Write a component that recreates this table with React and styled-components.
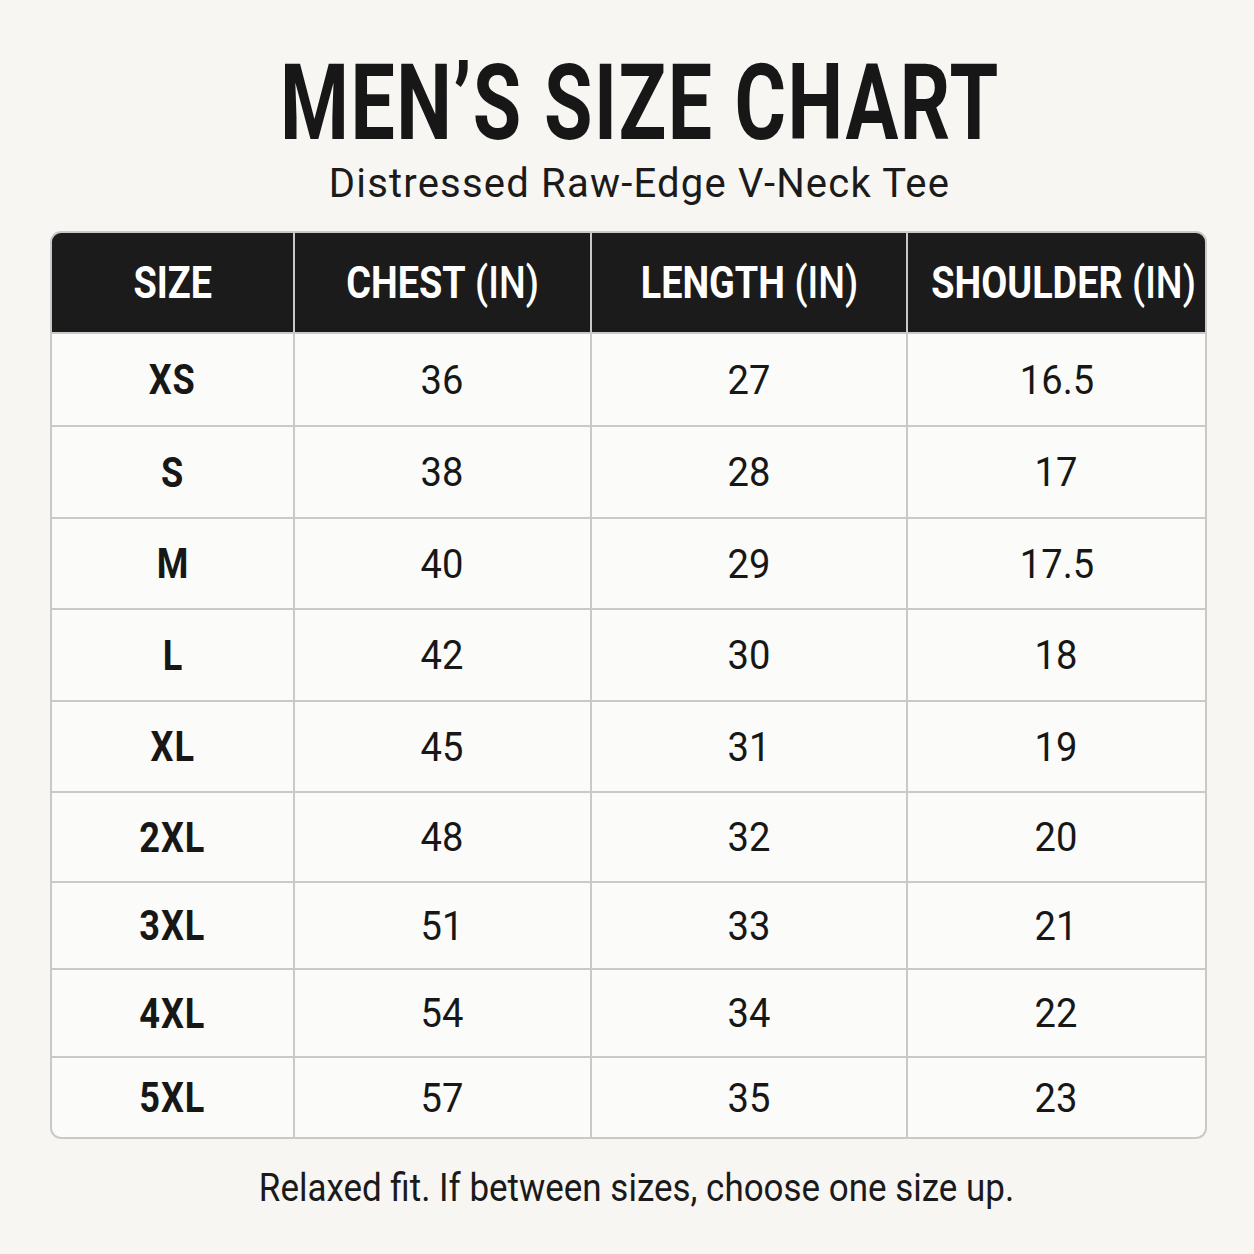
import React from 'react';
import styled, { createGlobalStyle } from 'styled-components';

const GlobalStyle = createGlobalStyle`
  html, body {
    margin: 0;
    padding: 0;
    background: #f7f6f2;
  }
  body {
    font-family: Roboto, "Liberation Sans", Arial, sans-serif;
    color: #161616;
  }
`;

const rows = [
  ['XS', '36', '27', '16.5'],
  ['S', '38', '28', '17'],
  ['M', '40', '29', '17.5'],
  ['L', '42', '30', '18'],
  ['XL', '45', '31', '19'],
  ['2XL', '48', '32', '20'],
  ['3XL', '51', '33', '21'],
  ['4XL', '54', '34', '22'],
  ['5XL', '57', '35', '23'],
];

const headers = ['SIZE', 'CHEST', 'LENGTH', 'SHOULDER'];

const Page = styled.div`
  width: 1254px;
  min-height: 1254px;
  display: flex;
  flex-direction: column;
  align-items: center;
  padding: 51px 0 0 3px;
  box-sizing: border-box;
`;

const Heading = styled.header`
  display: flex;
  flex-direction: column;
  align-items: center;
  padding-left: 22px;
`;

// squeezes a run of text horizontally (no condensed font installed)
const Squeeze = styled.span`
  display: inline-block;
  white-space: nowrap;
  transform: scaleX(${(p) => p.$x});
  transform-origin: center;
`;

const Title = styled.h1`
  margin: 0;
  font-size: 105px;
  line-height: 1;
  font-weight: 700;
  color: #171717;
  letter-spacing: 2px;
`;

const Subtitle = styled.h2`
  margin: 8px 0 0;
  font-size: 40px;
  line-height: 1;
  font-weight: 400;
  letter-spacing: 1.2px;
  color: #1b1b1b;
`;

const Table = styled.div`
  margin-top: 27px;
  width: 1157px;
  box-sizing: border-box;
  display: grid;
  grid-template-columns: 241px 295px 314px 297px;
  grid-template-rows: 99px 91px 90px 89px 90px 89px 88px 85px 86px 79px;
  gap: 2px;
  background: #c9c9c7;
  border: 2px solid #c9c9c7;
  border-radius: 11px;
  overflow: hidden;
`;

const HeadCell = styled.div`
  background: #1b1b1b;
  color: #fff;
  display: flex;
  align-items: center;
  justify-content: center;
  padding-left: ${(p) => p.$nudge || 0}px;
  font-size: 45px;
  font-weight: 700;
`;

const Unit = styled.span`
  font-weight: 500;
`;

const Cell = styled.div`
  background: #fbfbf9;
  display: flex;
  align-items: center;
  justify-content: center;
  font-size: ${(p) => (p.$size ? '42px' : '41px')};
  font-weight: ${(p) => (p.$size ? 700 : 400)};
  letter-spacing: ${(p) => (p.$size ? '1px' : '0')};
  color: #171717;
`;

const Note = styled.p`
  margin: 30px 0 0;
  padding-left: 16px;
  font-size: 38px;
  line-height: 1;
  color: #1a1a1a;
`;

export default function App() {
  return (
    <Page>
      <GlobalStyle />
      <Heading>
        <Title>
          <Squeeze $x={0.75}>MEN’S SIZE CHART</Squeeze>
        </Title>
        <Subtitle>Distressed Raw-Edge V-Neck Tee</Subtitle>
      </Heading>
      <Table>
        {headers.map((h, i) => (
          <HeadCell key={h} $nudge={i === 3 ? 14 : 0}>
            <Squeeze $x={0.84}>
              {h}
              {i > 0 && <Unit> (IN)</Unit>}
            </Squeeze>
          </HeadCell>
        ))}
        {rows.map((r) =>
          r.map((v, i) => (
            <Cell key={r[0] + i} $size={i === 0}>
              <Squeeze $x={i === 0 ? 0.86 : 0.93}>{v}</Squeeze>
            </Cell>
          ))
        )}
      </Table>
      <Note>
        <Squeeze $x={0.92}>Relaxed fit. If between sizes, choose one size up.</Squeeze>
      </Note>
    </Page>
  );
}
